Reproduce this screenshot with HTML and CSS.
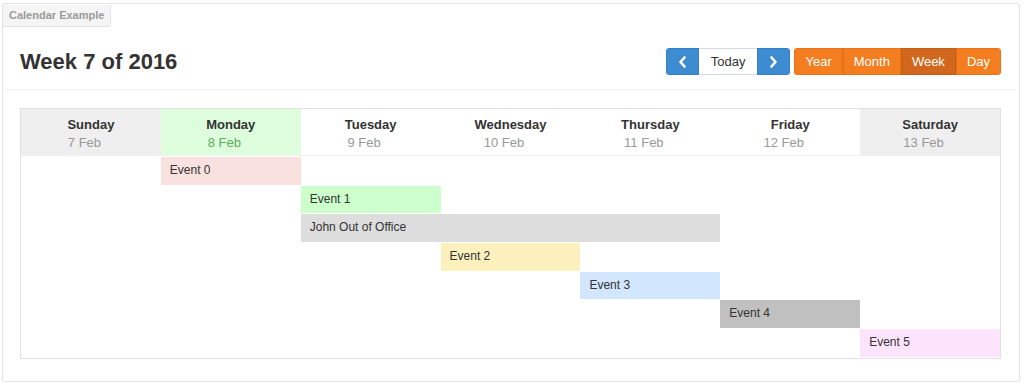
FILE: index.html
```html
<!DOCTYPE html>
<html lang="en">
<head>
    <meta charset="UTF-8">
    <title>Calendar Example</title>
    <link rel="stylesheet" href="styles.css">
</head>
<body>
    <div class="panel">
        <span class="panel-tab">Calendar Example</span>

        <!-- Title and navigation -->
        <div class="page-header">
            <h3>Week 7 of 2016</h3>
            <div class="toolbar">
                <div class="btn-group blue">
                    <button class="btn btn-arrow">
                        <svg width="9" height="12" viewBox="0 0 9 12"><path d="M6.5 1.5 L2.5 6 L6.5 10.5" fill="none" stroke="#fff" stroke-width="2.6" stroke-linecap="round" stroke-linejoin="round"/></svg>
                    </button>
                    <button class="btn btn-today">Today</button>
                    <button class="btn btn-arrow">
                        <svg width="9" height="12" viewBox="0 0 9 12"><path d="M2.5 1.5 L6.5 6 L2.5 10.5" fill="none" stroke="#fff" stroke-width="2.6" stroke-linecap="round" stroke-linejoin="round"/></svg>
                    </button>
                </div>
                <div class="btn-group orange">
                    <button class="btn">Year</button>
                    <button class="btn">Month</button>
                    <button class="btn active">Week</button>
                    <button class="btn">Day</button>
                </div>
            </div>
        </div>

        <!-- Week view -->
        <div class="cal-week">
            <div class="cal-head">
                <div class="cal-day weekend"><b>Sunday</b><small>7 Feb</small></div>
                <div class="cal-day today"><b>Monday</b><small>8 Feb</small></div>
                <div class="cal-day"><b>Tuesday</b><small>9 Feb</small></div>
                <div class="cal-day"><b>Wednesday</b><small>10 Feb</small></div>
                <div class="cal-day"><b>Thursday</b><small>11 Feb</small></div>
                <div class="cal-day"><b>Friday</b><small>12 Feb</small></div>
                <div class="cal-day weekend"><b>Saturday</b><small>13 Feb</small></div>
            </div>
            <div class="cal-rows">
                <div class="cal-row"><div class="event ev-red" style="grid-column: 2 / span 1">Event 0</div></div>
                <div class="cal-row"><div class="event ev-green" style="grid-column: 3 / span 1">Event 1</div></div>
                <div class="cal-row"><div class="event ev-grey" style="grid-column: 3 / span 3">John Out of Office</div></div>
                <div class="cal-row"><div class="event ev-yellow" style="grid-column: 4 / span 1">Event 2</div></div>
                <div class="cal-row"><div class="event ev-blue" style="grid-column: 5 / span 1">Event 3</div></div>
                <div class="cal-row"><div class="event ev-dark" style="grid-column: 6 / span 1">Event 4</div></div>
                <div class="cal-row"><div class="event ev-pink" style="grid-column: 7 / span 1">Event 5</div></div>
            </div>
        </div>
    </div>
</body>
</html>
```

FILE: styles.css
```css
body {
    margin: 0;
    font-family: "Liberation Sans", Arial, sans-serif;
    color: #333;
    background: #fff;
}

.panel {
    position: relative;
    width: 1018px;
    height: 379px;
    margin: 3px 0 0 2px;
    padding: 0 3px 0 2px;
    box-sizing: border-box;
    border: 1px solid #e3e3e3;
    border-radius: 3px;
}

.panel-tab {
    position: absolute;
    top: 1px;
    left: 0;
    padding: 3px 6px 4px;
    font-size: 11px;
    font-weight: bold;
    line-height: 14px;
    color: #9a9a9a;
    background: #f5f5f5;
    border: 1px solid #e3e3e3;
    border-top: none;
    border-left: none;
    border-radius: 0 0 3px 0;
}

.page-header {
    display: flex;
    align-items: center;
    justify-content: space-between;
    padding: 44px 15px 14px;
    border-bottom: 1px solid #eee;
}

.page-header h3 {
    margin: 0;
    font-size: 22px;
    line-height: 27px;
    font-weight: bold;
    color: #333;
}

.toolbar {
    display: flex;
    gap: 4px;
}

.btn-group {
    display: flex;
    height: 27px;
    border-radius: 4px;
    overflow: hidden;
}

.btn {
    font-family: inherit;
    font-size: 13px;
    line-height: 25px;
    padding: 0 10px;
    margin: 0;
    border: 1px solid transparent;
    color: #fff;
    cursor: pointer;
}

.blue .btn {
    background: #3d8bd0;
    border-color: #3580c4;
}

.blue .btn-arrow {
    padding: 0 11px;
    display: flex;
    align-items: center;
}

.blue .btn-today {
    background: #fff;
    color: #333;
    padding: 0 12px;
    border-color: #cfdbe6;
    border-left: none;
    border-right: none;
}

.orange .btn {
    background: #f47d20;
    border-color: #e8731a;
}

.orange .btn + .btn {
    border-left-color: #e26f17;
}

.orange .btn.active {
    background: #d0671c;
    border-color: #c65f16;
}

.cal-week {
    margin: 18px 15px 0;
    border: 1px solid #e1e1e1;
}

.cal-head {
    display: grid;
    grid-template-columns: repeat(7, 1fr);
    border-bottom: 1px solid #f1f1f1;
}

.cal-day {
    display: flex;
    flex-direction: column;
    align-items: center;
    height: 46px;
    padding-top: 7px;
    box-sizing: border-box;
    font-size: 13px;
    line-height: 18px;
}

.cal-day b {
    color: #333;
}

.cal-day small {
    font-size: 13px;
    color: #999;
    padding-right: 13px;
}

.cal-day.weekend {
    background: #efefef;
}

.cal-day.today {
    background: #ddfddd;
}

.cal-day.today small {
    color: #5cad5c;
}

.cal-rows {
    padding-top: 1px;
}

.cal-row {
    display: grid;
    grid-template-columns: repeat(7, 1fr);
    height: 27.5px;
    margin-bottom: 1.2px;
}

.event {
    font-size: 12px;
    line-height: 27px;
    padding-left: 9px;
    color: #333;
}

.ev-red { background: #f9e1df; }
.ev-green { background: #ccffcc; }
.ev-grey { background: #dddddd; }
.ev-yellow { background: #fcf0bd; }
.ev-blue { background: #d2e6fd; }
.ev-dark { background: #c0c0c0; }
.ev-pink { background: #fde4fd; }
```
